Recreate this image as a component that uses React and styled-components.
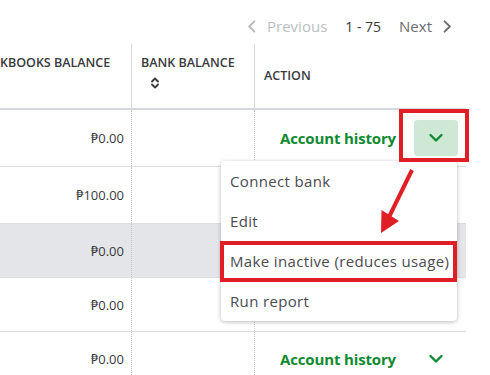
import React from 'react'
import styled, { createGlobalStyle } from 'styled-components'

const GlobalStyle = createGlobalStyle`
  body {
    margin: 0;
    background: #fff;
    font-family: "Open Sans", Lato, sans-serif;
    color: #393a3d;
  }
`

const rows = [
  { amount: '₱0.00', height: 56, open: true },
  { amount: '₱100.00', height: 56 },
  { amount: '₱0.00', height: 53, hover: true },
  { amount: '₱0.00', height: 53 },
  { amount: '₱0.00', height: 53, showAction: true },
]

const menuItems = ['Connect bank', 'Edit', 'Make inactive (reduces usage)', 'Run report']

const Chevron = ({ dir = 'down', color = '#108a30', size = 16, width = 2.4 }) => {
  const d = {
    down: 'M2.5 5 L8 10.5 L13.5 5',
    left: 'M10 2.5 L4.5 8 L10 13.5',
    right: 'M6 2.5 L11.5 8 L6 13.5',
  }[dir]
  return (
    <svg width={size} height={size} viewBox="0 0 16 16">
      <path d={d} fill="none" stroke={color} strokeWidth={width} strokeLinecap="round" strokeLinejoin="round" />
    </svg>
  )
}

const SortIcon = () => (
  <svg width="8" height="12" viewBox="0 0 8 12">
    <path d="M1 4.5 L4 1.5 L7 4.5 M1 7.5 L4 10.5 L7 7.5" fill="none" stroke="#393a3d" strokeWidth="1.8" strokeLinecap="round" strokeLinejoin="round" />
  </svg>
)

const App = () => {
  return (
    <Page>
      <GlobalStyle />
      <Pager>
        <PagerLink $muted>
          <Chevron dir="left" color="#b5b9c0" size={15} width={2} />
          Previous
        </PagerLink>
        <PageRange>1 - 75</PageRange>
        <PagerLink>
          Next
          <Chevron dir="right" color="#6b6c72" size={15} width={2} />
        </PagerLink>
      </Pager>

      <Table>
        <HeadRow>
          <HeadCell>KBOOKS BALANCE</HeadCell>
          <HeadCell $divider>
            BANK BALANCE
            <SortWrap>
              <SortIcon />
            </SortWrap>
          </HeadCell>
          <HeadCell $divider $center>ACTION</HeadCell>
        </HeadRow>

        {rows.map((r, i) => (
          <Row key={i} $hover={r.hover} style={{ height: r.height }}>
            <AmountCell>{r.amount}</AmountCell>
            <Cell $dotted />
            <ActionCell $dotted>
              {(r.open || r.showAction) && (
                <>
                  <HistoryLink>Account history</HistoryLink>
                  <DropButton $open={r.open}>
                    <Chevron />
                  </DropButton>
                </>
              )}
            </ActionCell>
          </Row>
        ))}
      </Table>

      <Menu>
        {menuItems.map((m) => (
          <MenuItem key={m}>{m}</MenuItem>
        ))}
      </Menu>

      <RedBox $top={109} $left={399} $width={70} $height={53} />
      <RedBox $top={241} $left={220} $width={237} $height={41} />

      <Arrow width="490" height="375" viewBox="0 0 490 375">
        <line x1="412" y1="170" x2="389" y2="217" stroke="#e01e26" strokeWidth="4" />
        <polygon points="381,233 381.5,210 399,221" fill="#e01e26" />
      </Arrow>
    </Page>
  )
}

export default App

const Page = styled.div`
  position: relative;
  width: 490px;
  height: 375px;
  overflow: hidden;
`

const Pager = styled.div`
  display: flex;
  justify-content: flex-end;
  align-items: center;
  gap: 18px;
  height: 20px;
  padding: 16px 36px 8px 0;
  font-size: 15px;
`

const PagerLink = styled.span`
  display: flex;
  align-items: center;
  gap: 7px;
  color: ${(p) => (p.$muted ? '#babec5' : '#6b6c72')};
`

const PageRange = styled.span`
  color: #393a3d;
  font-size: 14px;
`

const Table = styled.div`
  width: 466px;
`

const HeadRow = styled.div`
  display: grid;
  grid-template-columns: 131px 123px 212px;
  height: 64px;
  border-bottom: 2px solid #d4d7dc;
`

const HeadCell = styled.div`
  display: flex;
  flex-direction: column;
  justify-content: ${(p) => (p.$center ? 'center' : 'flex-start')};
  padding: ${(p) => (p.$center ? '0 9px 2px' : '10px 9px 0')};
  padding-left: ${(p) => (p.$divider ? '9px' : '0')};
  border-left: ${(p) => (p.$divider ? '1px solid #d4d7dc' : 'none')};
  font-size: 12.5px;
  font-weight: 600;
  letter-spacing: 0;
  color: #393a3d;
  white-space: nowrap;
`

const SortWrap = styled.span`
  display: block;
  margin: 6px 0 0 10px;
  line-height: 0;
`

const Row = styled.div`
  display: grid;
  grid-template-columns: 131px 123px 212px;
  border-bottom: 1px solid #dcdee2;
  background: ${(p) => (p.$hover ? '#e3e5e8' : '#fff')};
`

const Cell = styled.div`
  display: flex;
  align-items: center;
  border-left: ${(p) => (p.$dotted ? '1px dotted #c4c7cc' : 'none')};
`

const AmountCell = styled(Cell)`
  justify-content: flex-end;
  padding-right: 7px;
  font-size: 13px;
  color: #393a3d;
`

const ActionCell = styled(Cell)`
  justify-content: flex-end;
  gap: 18px;
  padding-right: 8px;
`

const HistoryLink = styled.span`
  font-size: 15px;
  font-weight: 700;
  letter-spacing: -0.15px;
  color: #108a30;
`

const DropButton = styled.span`
  display: flex;
  align-items: center;
  justify-content: center;
  width: 44px;
  height: 36px;
  border-radius: 4px;
  background: ${(p) => (p.$open ? '#cfe8d5' : 'transparent')};
`

const Menu = styled.div`
  position: absolute;
  top: 161px;
  left: 221px;
  width: 236px;
  background: #fff;
  border-radius: 4px;
  box-shadow: 0 1px 4px rgba(0, 0, 0, 0.28);
`

const MenuItem = styled.div`
  display: flex;
  align-items: center;
  height: 40px;
  padding-left: 9px;
  font-size: 15px;
  letter-spacing: 0.35px;
  color: #4a4b50;
  white-space: nowrap;
`

const RedBox = styled.div`
  position: absolute;
  top: ${(p) => p.$top}px;
  left: ${(p) => p.$left}px;
  width: ${(p) => p.$width}px;
  height: ${(p) => p.$height}px;
  box-sizing: border-box;
  border: 4px solid #e01e26;
`

const Arrow = styled.svg`
  position: absolute;
  top: 0;
  left: 0;
  pointer-events: none;
`
